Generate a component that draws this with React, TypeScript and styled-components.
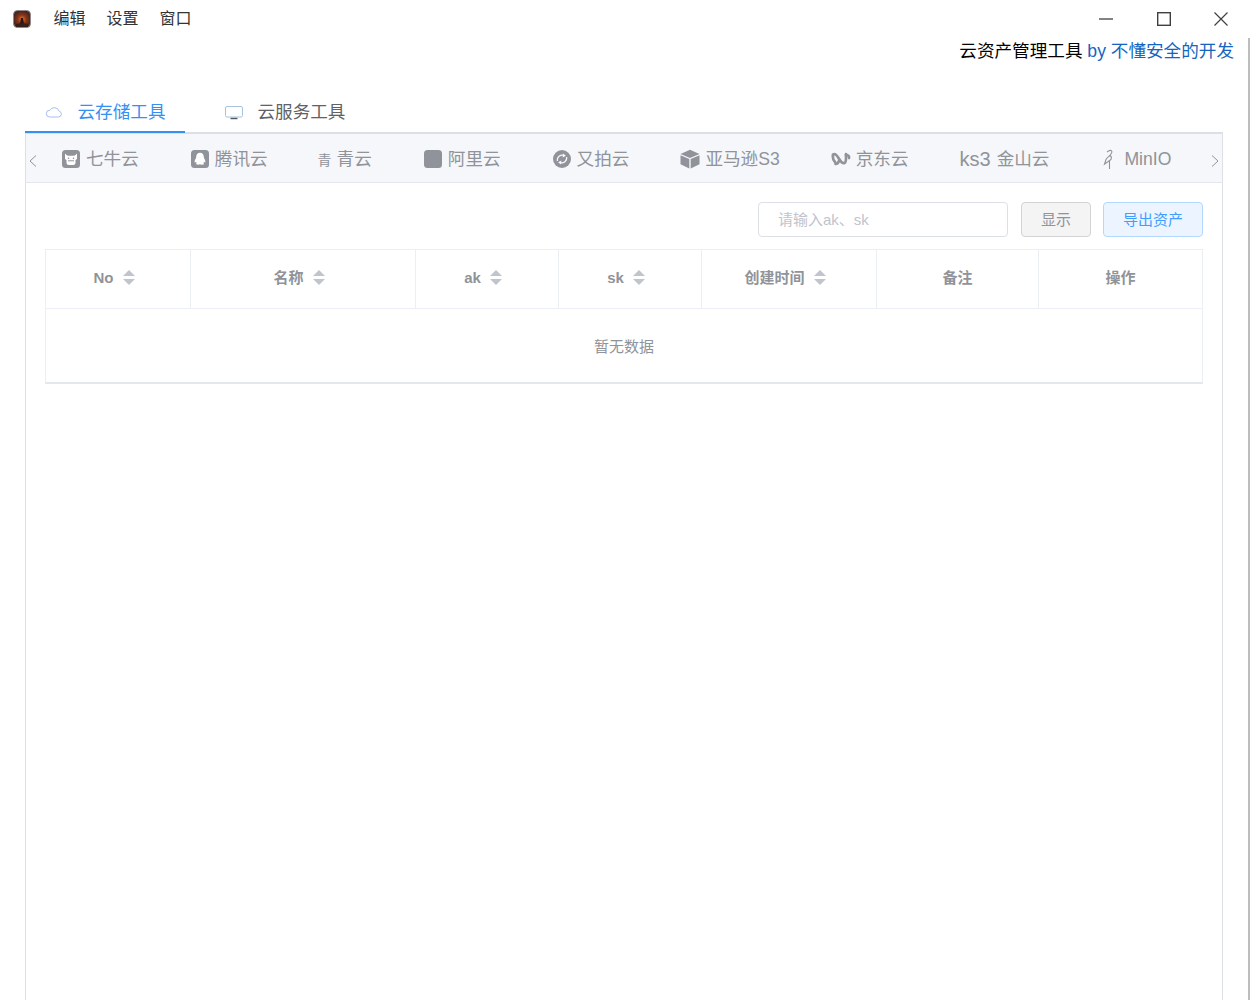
import React from "react";
import styled, { createGlobalStyle } from "styled-components";

const GlobalStyle = createGlobalStyle`
    html, body {
        margin: 0;
        padding: 0;
        background: #ffffff;
    }
    body {
        font-family: "Liberation Sans", "Noto Sans CJK SC", sans-serif;
        line-height: 1.4;
        overflow: hidden;
    }
    * {
        box-sizing: border-box;
    }
`;

const columns = [
    { label: "No", sortable: true },
    { label: "名称", sortable: true },
    { label: "ak", sortable: true },
    { label: "sk", sortable: true },
    { label: "创建时间", sortable: true },
    { label: "备注", sortable: false },
    { label: "操作", sortable: false },
];

const AppLogo = () => (
    <svg width="18" height="18" viewBox="0 0 18 18">
        <defs>
            <radialGradient id="fire" cx="50%" cy="52%" r="55%">
                <stop offset="0%" stopColor="#e8822c" />
                <stop offset="45%" stopColor="#8f3418" />
                <stop offset="100%" stopColor="#3a2320" />
            </radialGradient>
        </defs>
        <rect x="0.5" y="0.5" width="17" height="17" rx="4" fill="url(#fire)" stroke="#8f8a88" />
        <path d="M8 8h2l1 6H7z" fill="#2a1510" />
        <path d="M3 14c2-1 10-1 12 0v3H3z" fill="#33201c" />
    </svg>
);

const CloudIcon = () => (
    <svg width="18" height="18" viewBox="0 0 18 18" fill="none" stroke="#a9bdf2" strokeWidth="1">
        <path d="M4.5 14h9a3 3 0 0 0 .6-5.900A5 5 0 0 0 5 7.200 3.400 3.400 0 0 0 4.500 14z" />
    </svg>
);

const MonitorIcon = () => (
    <svg width="18" height="18" viewBox="0 0 18 18" fill="none">
        <rect x="0.5" y="3.500" width="17" height="10.500" rx="1.500" stroke="#a8c4dc" />
        <path d="M5.500 15.500h7" stroke="#4c5668" strokeWidth="1.400" />
    </svg>
);

const QiniuIcon = () => (
    <svg width="18" height="18" viewBox="0 0 18 18">
        <rect width="18" height="18" rx="3.500" fill="#909399" />
        <path d="M3 3.500l1.500 1.500c.5.500 1 .7 1.700.7h5.600c.7 0 1.200-.2 1.700-.7L15 3.500V9l-1.500 1v2.500a2.500 2.500 0 0 1-2.500 2.500H7a2.500 2.500 0 0 1-2.500-2.500V10L3 9z" fill="#fff" />
        <circle cx="6.500" cy="8.300" r=".8" fill="#909399" />
        <circle cx="11.500" cy="8.300" r=".8" fill="#909399" />
        <path d="M6 10.800h6" stroke="#909399" />
    </svg>
);

const TencentIcon = () => (
    <svg width="18" height="18" viewBox="0 0 18 18">
        <rect width="18" height="18" rx="3.500" fill="#909399" />
        <path d="M9 2.800c2.500 0 3.800 1.900 3.800 4.200 0 .8.300 1.300.7 2 .7 1.100 1 2.300.8 3.200-.2.500-.8.300-1.300-.4-.1.600-.4 1.100-.8 1.500.7.200 1 .5 1 .8 0 .4-1 .6-2.300.6-1 0-1.600-.2-1.900-.5-.3.300-.9.500-1.900.5-1.300 0-2.300-.2-2.300-.6 0-.3.300-.6 1-.8-.4-.4-.7-.9-.8-1.500-.5.700-1.100.9-1.300.4-.2-.9.100-2.100.8-3.200.4-.7.700-1.200.7-2C5.200 4.700 6.500 2.800 9 2.800z" fill="#fff" />
    </svg>
);

const AliyunIcon = () => (
    <svg width="18" height="18" viewBox="0 0 18 18">
        <rect width="18" height="18" rx="3.500" fill="#909399" />
    </svg>
);

const UpyunIcon = () => (
    <svg width="18" height="18" viewBox="0 0 18 18" fill="none">
        <circle cx="9" cy="9" r="9" fill="#909399" />
        <path d="M4.300 11C3.800 7.200 7.300 4.300 11 5.300M13.700 7c.5 3.800-3 6.700-6.700 5.700" stroke="#f5f7fa" strokeWidth="1.300" />
        <path d="M10 3.500l3 2.300-3.300 1.700zM8 14.500L5 12.200l3.300-1.700z" fill="#f5f7fa" />
    </svg>
);

const AmazonIcon = () => (
    <svg width="20" height="20" viewBox="0 0 20 20">
        <path d="M10 .8l9.500 4.200L10 9 .5 5z" fill="#909399" />
        <path d="M.5 6.300l8.800 3.800v9.400L.5 15.200z" fill="#909399" />
        <path d="M19.500 6.300l-8.800 3.800v9.400l8.800-4.300z" fill="#909399" />
    </svg>
);

const JdIcon = () => (
    <svg width="20" height="18" viewBox="0 0 20 18" fill="none" stroke="#909399" strokeWidth="2.700" strokeLinecap="round">
        <path d="M2 4.500c-.5 3 .5 6 2 7.500M2 4.500c2-1.500 4 1 5.500 3.500 1.500 2.500 3.500 6 6 5 2-.8 1.500-4.500 1.500-9" />
        <path d="M4.500 14c2-.3 3-1.500 3.500-3M15 5c2 0 3.500 1 3 3" />
    </svg>
);

const MinioIcon = () => (
    <svg width="16" height="20" viewBox="0 0 16 20" fill="none" stroke="#909399" strokeWidth="1.100">
        <path d="M4 3l2.500-1.500C8.500.8 9.500 2.800 8.500 4L7 6.500c2 1.500 1.800 3.500 0 4.800L1.500 15.200 3 10.500C4 8.500 6 7.500 7 6.500" />
        <path d="M6.500 11.500V20" />
    </svg>
);

const SortCaret = () => (
    <SortBox>
        <svg width="12" height="15" viewBox="0 0 12 15" fill="#c0c4cc">
            <path d="M6 0l6 6H0z" />
            <path d="M6 15L0 9h12z" />
        </svg>
    </SortBox>
);

const App: React.FunctionComponent = () => {
    return (
        <Page>
            <GlobalStyle />
            <TitleBar>
                <LogoBox>
                    <AppLogo />
                </LogoBox>
                <Menu>
                    <MenuItem>编辑</MenuItem>
                    <MenuItem>设置</MenuItem>
                    <MenuItem>窗口</MenuItem>
                </Menu>
                <WindowControls>
                    <WindowButton>
                        <svg width="16" height="16" viewBox="0 0 16 16" stroke="#404040" strokeWidth="1.300" fill="none">
                            <path d="M1 8h14" />
                        </svg>
                    </WindowButton>
                    <WindowButton>
                        <svg width="16" height="16" viewBox="0 0 16 16" stroke="#404040" strokeWidth="1.400" fill="none">
                            <rect x="1.700" y="1.700" width="12.600" height="12.600" />
                        </svg>
                    </WindowButton>
                    <WindowButton>
                        <svg width="16" height="16" viewBox="0 0 16 16" stroke="#404040" strokeWidth="1.200" fill="none">
                            <path d="M1.500 1.500l13 13M14.500 1.500l-13 13" />
                        </svg>
                    </WindowButton>
                </WindowControls>
            </TitleBar>

            <Body>
                <Heading>
                    云资产管理工具 <HeadingBy>by 不懂安全的开发</HeadingBy>
                </Heading>

                <Main>
                    <TopTabs>
                        <TopTab $active>
                            <CloudIcon />
                            <span>云存储工具</span>
                        </TopTab>
                        <TopTab>
                            <MonitorIcon />
                            <span>云服务工具</span>
                        </TopTab>
                    </TopTabs>

                    <Card>
                        <ProviderBar>
                            <NavArrow>
                                <svg width="8" height="12" viewBox="0 0 8 12" fill="none" stroke="#909399">
                                    <path d="M7 .5L1 6l6 5.500" />
                                </svg>
                            </NavArrow>
                            <ProviderList>
                                <Provider $gap={6}><QiniuIcon />七牛云</Provider>
                                <Provider $gap={6}><TencentIcon />腾讯云</Provider>
                                <Provider $gap={5} $shift={-2}><SmallGlyph>青</SmallGlyph>青云</Provider>
                                <Provider $gap={6}><AliyunIcon />阿里云</Provider>
                                <Provider $gap={6}><UpyunIcon />又拍云</Provider>
                                <Provider $gap={5} $shift={-1}><AmazonIcon />亚马逊S3</Provider>
                                <Provider $gap={5} $shift={-1}><JdIcon />京东云</Provider>
                                <Provider $gap={6} $shift={-1}><KsMark>ks3</KsMark>金山云</Provider>
                                <Provider $gap={5} $shift={2}><MinioIcon />MinIO</Provider>
                            </ProviderList>
                            <NavArrow $right>
                                <svg width="8" height="12" viewBox="0 0 8 12" fill="none" stroke="#909399">
                                    <path d="M1 .5L7 6l-6 5.500" />
                                </svg>
                            </NavArrow>
                        </ProviderBar>

                        <Panel>
                            <Toolbar>
                                <SearchInput placeholder="请输入ak、sk" />
                                <ShowButton>显示</ShowButton>
                                <ExportButton>导出资产</ExportButton>
                            </Toolbar>

                            <Table>
                                <HeaderRow>
                                    {columns.map((col) => (
                                        <HeaderCell key={col.label}>
                                            {col.label}
                                            {col.sortable && <SortCaret />}
                                        </HeaderCell>
                                    ))}
                                </HeaderRow>
                                <EmptyRow>暂无数据</EmptyRow>
                            </Table>
                        </Panel>
                    </Card>
                </Main>
            </Body>
        </Page>
    );
};

export default App;

// Styled-component

const Page = styled.div`
    display: flex;
    flex-direction: column;
    width: 1250px;
    height: 1000px;
    overflow: hidden;
    background: #ffffff;
`;

const TitleBar = styled.div`
    display: flex;
    align-items: center;
    height: 38px;
    flex: none;
`;

const LogoBox = styled.div`
    display: flex;
    align-items: center;
    padding-left: 13px;
    width: 53.5px;
`;

const Menu = styled.div`
    display: flex;
    gap: 21px;
`;

const MenuItem = styled.span`
    font-size: 16px;
    color: #333333;
`;

const WindowControls = styled.div`
    display: flex;
    margin-left: auto;
`;

const WindowButton = styled.div`
    display: flex;
    align-items: center;
    justify-content: center;
    width: 57.5px;
    height: 38px;
`;

const Body = styled.div`
    display: flex;
    flex-direction: column;
    flex: 1;
    min-height: 0;
    border-right: 2px solid #bdbdbd;
`;

const Heading = styled.div`
    text-align: right;
    padding-right: 14px;
    height: 26px;
    line-height: 26px;
    font-size: 17.6px;
    color: #000000;
`;

const HeadingBy = styled.span`
    color: #1565c0;
`;

const Main = styled.div`
    display: flex;
    flex-direction: column;
    flex: 1;
    min-height: 0;
    padding: 27px 25px 0 25px;
`;

const TopTabs = styled.div`
    position: relative;
    z-index: 1;
    display: flex;
    gap: 20px;
    margin-bottom: -1px;
`;

const TopTab = styled.div<{ $active?: boolean }>`
    display: flex;
    align-items: center;
    gap: 14.5px;
    height: 42px;
    padding: 2px 19.5px 0 20px;
    font-size: 17.6px;
    color: ${(p) => (p.$active ? "#3490f3" : "#606266")};
    border-bottom: 2px solid ${(p) => (p.$active ? "#3490f3" : "transparent")};
`;

const Card = styled.div`
    flex: 1;
    border: 1px solid #dcdfe6;
    border-top: 2px solid #dcdfe6;
    border-bottom: none;
`;

const ProviderBar = styled.div`
    display: flex;
    align-items: center;
    height: 49px;
    background: #f5f7fa;
    border-bottom: 1px solid #e4e7ed;
`;

const NavArrow = styled.div<{ $right?: boolean }>`
    display: flex;
    align-items: center;
    justify-content: center;
    width: 14px;
    margin-left: ${(p) => (p.$right ? "auto" : "0")};
    margin-right: ${(p) => (p.$right ? "0" : "22px")};
    padding-top: 6px;
`;

const ProviderList = styled.div`
    display: flex;
    align-items: center;
    gap: 52px;
    padding-top: 2px;
`;

const Provider = styled.div<{ $gap: number; $shift?: number }>`
    display: flex;
    align-items: center;
    gap: ${(p) => p.$gap}px;
    margin-left: ${(p) => p.$shift ?? 0}px;
    font-size: 17.6px;
    color: #909399;
    white-space: nowrap;
`;

const SmallGlyph = styled.span`
    font-size: 14px;
    line-height: 18px;
    padding-top: 2px;
`;

const KsMark = styled.span`
    font-size: 20px;
`;

const Panel = styled.div`
    padding: 19px 19px 0 19px;
`;

const Toolbar = styled.div`
    display: flex;
    justify-content: flex-end;
    gap: 12px;
    height: 35px;
    margin-bottom: 12px;
`;

const SearchInput = styled.input`
    width: 250px;
    height: 35px;
    margin-right: 1px;
    padding: 0 19px;
    border: 1px solid #dcdfe6;
    border-radius: 4px;
    font-family: inherit;
    font-size: 15px;
    outline: none;

    &::placeholder {
        color: #c0c4cc;
        opacity: 1;
    }
`;

const ShowButton = styled.button`
    width: 70px;
    height: 35px;
    padding: 0;
    border: 1px solid #d3d3d3;
    border-radius: 4px;
    background: #f4f4f4;
    font-family: inherit;
    font-size: 15px;
    line-height: 20px;
    color: #909399;
`;

const ExportButton = styled.button`
    width: 100px;
    height: 35px;
    padding: 0;
    border: 1px solid #b3d8ff;
    border-radius: 4px;
    background: #ecf5ff;
    font-family: inherit;
    font-size: 15px;
    line-height: 20px;
    color: #409eff;
`;

const Table = styled.div`
    border: 1px solid #ebeef5;
    border-bottom: 2px solid #e4e7ed;
`;

const HeaderRow = styled.div`
    display: grid;
    grid-template-columns: 145px 225px 143px 143px 175px 162px 1fr;
    height: 59px;
    border-bottom: 1px solid #ebeef5;
`;

const HeaderCell = styled.div`
    display: flex;
    align-items: center;
    justify-content: center;
    padding-bottom: 3px;
    border-right: 1px solid #ebeef5;
    font-size: 15px;
    font-weight: 700;
    color: #909399;

    &:last-child {
        border-right: none;
    }
`;

const SortBox = styled.span`
    display: flex;
    width: 29px;
    padding-left: 9px;
`;

const EmptyRow = styled.div`
    display: flex;
    align-items: center;
    justify-content: center;
    height: 73px;
    padding-top: 2px;
    font-size: 15px;
    color: #909399;
`;
